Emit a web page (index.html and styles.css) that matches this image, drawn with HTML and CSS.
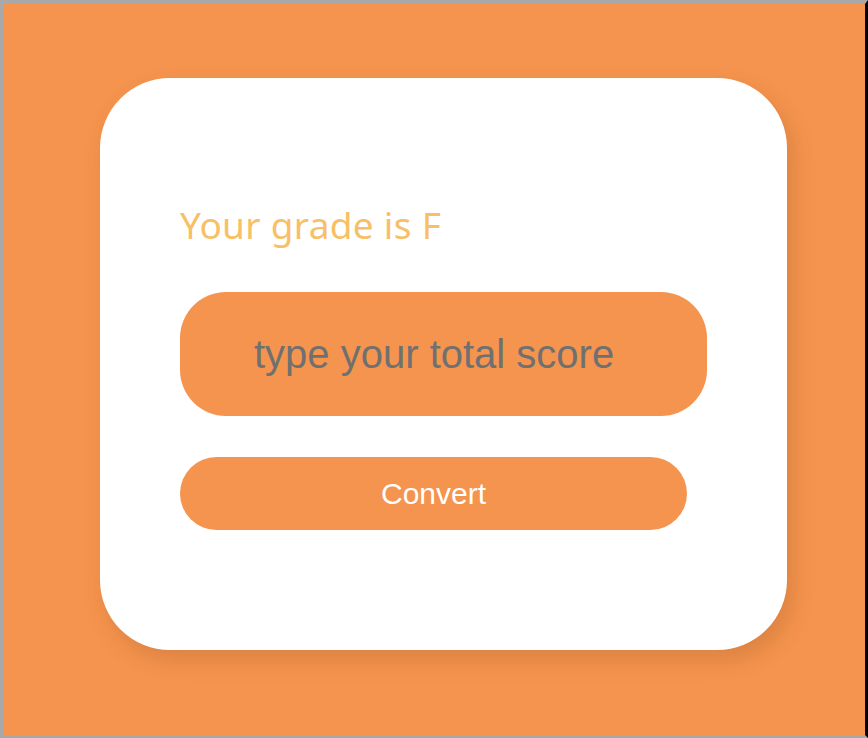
FILE: index.html
```html
<!DOCTYPE html>
<html>
<head>
<meta charset="utf-8">
<link rel="stylesheet" href="styles.css">
</head>
<body>
<div class="frame">
  <div class="card">
    <h1 class="grade">Your grade is F</h1>
    <input class="score" type="text" placeholder="type your total score">
    <button class="convert">Convert</button>
  </div>
</div>
</body>
</html>
```
FILE: styles.css
```css
html, body {
  margin: 0;
  padding: 0;
  background: #a8a8a8;
}
.frame {
  box-sizing: border-box;
  width: 868px;
  height: 738px;
  background: #f5944e;
  border-top: 4px solid #a8a8a8;
  border-left: 4px solid #a8a8a8;
  border-right: 3px solid #000;
  border-bottom: 3px solid #a8a8a8;
  padding: 74px 0 0 96px;
  overflow: hidden;
}
.card {
  box-sizing: border-box;
  width: 687px;
  height: 572px;
  background: #fff;
  border-radius: 70px;
  box-shadow: 6px 10px 22px rgba(120, 60, 20, 0.2);
  padding: 123px 80px 0 80px;
  display: flex;
  flex-direction: column;
  align-items: flex-start;
}
.grade {
  margin: 0;
  font-family: "Noto Sans", "Open Sans", sans-serif;
  font-weight: 400;
  font-size: 37px;
  letter-spacing: 0.3px;
  line-height: 48px;
  color: #f8bf66;
}
.score {
  box-sizing: border-box;
  margin-top: 43px;
  width: 527px;
  height: 124px;
  border: none;
  outline: none;
  border-radius: 46px;
  background: #f5944e;
  padding: 0 0 0 74px;
  font-family: "Liberation Sans", Arial, sans-serif;
  font-size: 40px;
  color: #6f6f6f;
}
.score::placeholder {
  color: #707070;
  opacity: 1;
}
.convert {
  box-sizing: border-box;
  margin-top: 41px;
  width: 507px;
  height: 73px;
  border: none;
  border-radius: 37px;
  background: #f5944e;
  color: #fff;
  font-family: "Liberation Sans", Arial, sans-serif;
  font-size: 30px;
  padding: 0;
}
```
